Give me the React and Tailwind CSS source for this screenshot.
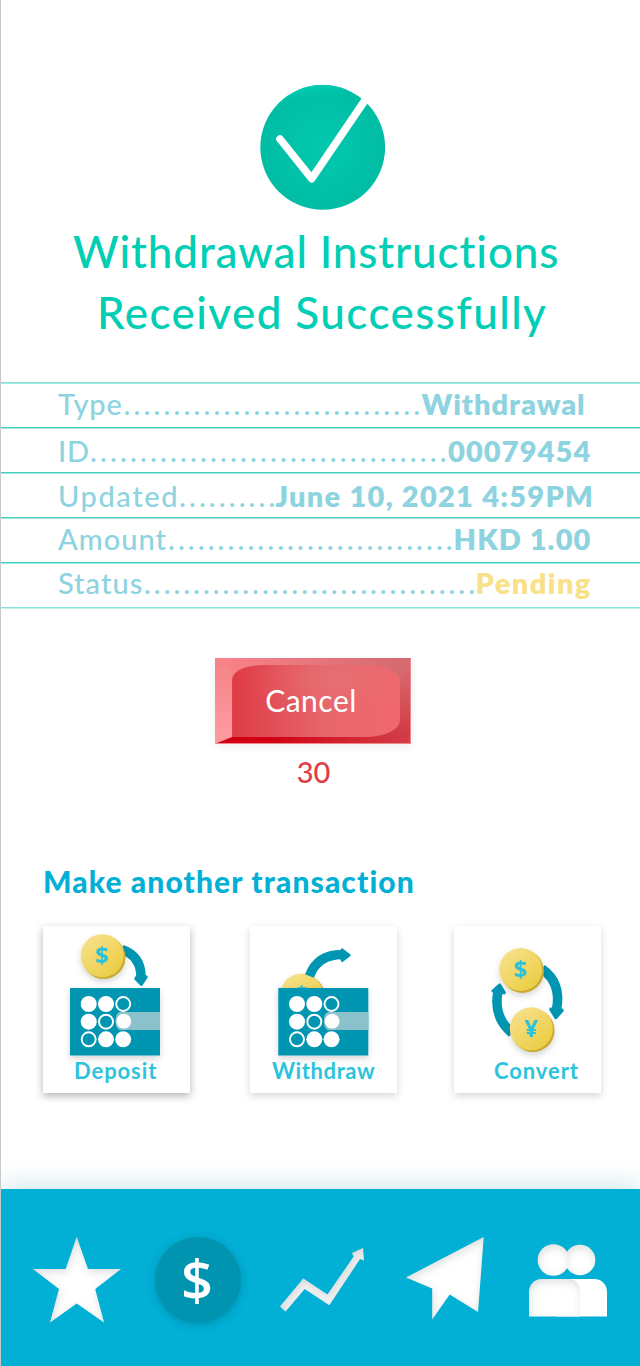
import React from 'react';

const rows = [
    { label: 'Type', dots: 30, value: 'Withdrawal', row: 'pt-[6px] border-[#85e2d8]', labelClass: 'w-[65.5px] tracking-[0.8px]', dotsClass: 'w-[298px] tracking-[3.15px]', valueClass: 'text-[#8dd3e0] tracking-[0.95px]' },
    { label: 'ID', dots: 36, value: '00079454', row: 'pt-[8px] border-[#3fcfbe]', labelClass: 'w-[32px] tracking-[0.8px]', dotsClass: 'w-[358px] tracking-[3.15px]', valueClass: 'text-[#8dd3e0] tracking-[1.1px]' },
    { label: 'Updated', dots: 10, value: 'June 10, 2021 4:59PM', row: 'pt-[8px] border-[#3fcfbe]', labelClass: 'w-[121px] tracking-[1.6px]', dotsClass: 'w-[96.5px] tracking-[3.1px]', valueClass: 'text-[#8dd3e0] tracking-[1.27px]' },
    { label: 'Amount', dots: 29, value: 'HKD 1.00', row: 'pt-[6px] border-[#3fcfbe]', labelClass: 'w-[110px] tracking-[1px]', dotsClass: 'w-[285.5px] tracking-[3.08px]', valueClass: 'text-[#8dd3e0] tracking-[1.1px]' },
    { label: 'Status', dots: 34, value: 'Pending', row: 'pt-[5px] border-[#3fcfbe]', labelClass: 'w-[86px] tracking-[1px]', dotsClass: 'w-[331.5px] tracking-[2.98px]', valueClass: 'text-[#f8e187] tracking-[1.4px]' },
];

const CheckBadge = () => (
    <svg className="ml-[259px] block h-[125px] w-[125px]" viewBox="0 0 125 125">
        <defs>
            <radialGradient id="badge">
                <stop offset="0" stopColor="#02c9ae" />
                <stop offset="1" stopColor="#00bda4" />
            </radialGradient>
            <linearGradient id="badgeRim" x1="0.35" y1="0" x2="0.5" y2="1">
                <stop offset="0" stopColor="#00d2b8" />
                <stop offset="0.14" stopColor="#00c3aa" stopOpacity="0" />
            </linearGradient>
        </defs>
        <circle cx="62.7" cy="62.3" r="62.4" fill="url(#badge)" />
        <circle cx="62.7" cy="62.3" r="62.4" fill="url(#badgeRim)" />
        <path d="M20 54L51.7 93.7L106.5 13" fill="none" stroke="#fff" strokeWidth="7.6" strokeLinecap="round" strokeLinejoin="round" />
    </svg>
);

const CancelButton = () => (
    <button className="relative ml-[214px] block h-[86px] w-[196px] shadow-[0_3px_8px_rgba(0,60,50,0.08)]">
        <svg className="absolute inset-0 h-[86px] w-[196px]" viewBox="0 0 195 86" preserveAspectRatio="none">
            <defs>
                <linearGradient id="bevelTop">
                    <stop offset="0" stopColor="#f98489" />
                    <stop offset="1" stopColor="#d4696e" />
                </linearGradient>
                <linearGradient id="bevelLeft" x1="0" y1="0" x2="0" y2="1">
                    <stop offset="0" stopColor="#f58387" />
                    <stop offset="1" stopColor="#ff9ca2" />
                </linearGradient>
                <linearGradient id="bevelRight" x1="0" y1="0" x2="0" y2="1">
                    <stop offset="0.1" stopColor="#d96a70" />
                    <stop offset="0.9" stopColor="#d13a43" />
                </linearGradient>
                <linearGradient id="bevelBottom">
                    <stop offset="0.25" stopColor="#d10012" />
                    <stop offset="1" stopColor="#d33e47" />
                </linearGradient>
                <linearGradient id="face">
                    <stop offset="0" stopColor="#de3b44" />
                    <stop offset="0.55" stopColor="#e7666c" />
                    <stop offset="1" stopColor="#f0686e" />
                </linearGradient>
                <radialGradient id="faceGlow" cx="0.6" cy="0.2" r="0.5">
                    <stop offset="0" stopColor="#e57475" stopOpacity="0.7" />
                    <stop offset="1" stopColor="#e66a6e" stopOpacity="0" />
                </radialGradient>
            </defs>
            <rect width="195" height="86" fill="url(#bevelTop)" />
            <path d="M0 0L17 14V79L0 86Z" fill="url(#bevelLeft)" />
            <path d="M195 0V86L150 79L184 60V20Z" fill="url(#bevelRight)" />
            <path d="M2 85L17 79H195V85Z" fill="url(#bevelBottom)" />
            <path d="M17 79V22C17 12 32 7 49 7H148C168 7 184 13 184 24V62C184 72 169 79 147 79Z" fill="url(#face)" />
            <path d="M17 79V22C17 12 32 7 49 7H148C168 7 184 13 184 24V62C184 72 169 79 147 79Z" fill="url(#faceGlow)" />
            <path d="M1 85.5H194.5V0" fill="none" stroke="#f0858a" />
        </svg>
        <span className="relative -top-[1px] -left-[2px] block text-center text-[30px] leading-[86px] font-normal tracking-[0.5px] text-white">Cancel</span>
    </button>
);

const Coin = ({ x, y, sign }) => (
    <g filter="url(#soft)">
        <circle cx={x + 1.6} cy={y + 1.7} r="21.7" fill="#c9ab36" />
        <circle cx={x} cy={y} r="21.5" fill="url(#gold)" />
        <text x={x} y={y + 8.2} textAnchor="middle" fill="#2bc2db" fontFamily="Open Sans" fontSize="24" fontWeight="700">{sign}</text>
    </g>
);

// keypad with a translucent card sliding out of it
const Keypad = ({ x }) => (
    <g transform={`translate(${x} 62)`}>
        <rect width="90" height="67.5" fill="#0095b1" filter="url(#soft)" />
        {[[18.7, 16], [36, 16], [18.7, 33.7], [36, 51.3], [53.2, 51.3]].map(([cx, cy]) => (
            <circle key={`${cx}-${cy}`} cx={cx} cy={cy} r="8" fill="#fff" />
        ))}
        {[[53.2, 16], [36, 33.7], [18.7, 51.3]].map(([cx, cy]) => (
            <circle key={`${cx}-${cy}`} cx={cx} cy={cy} r="7" fill="none" stroke="#fff" strokeWidth="1.9" />
        ))}
        <path d="M90 24H50C44 25 44 41 50 42H90Z" fill="#8bc1ca" />
        <circle cx="53.8" cy="33.2" r="7.4" fill="#fff" />
    </g>
);

const SvgDefs = () => (
    <svg className="absolute h-0 w-0">
        <defs>
            <linearGradient id="gold" x1="0.1" y1="0.1" x2="0.8" y2="0.9">
                <stop offset="0" stopColor="#f7e08b" />
                <stop offset="1" stopColor="#ebce45" />
            </linearGradient>
            <filter id="soft" x="-30%" y="-30%" width="160%" height="170%">
                <feDropShadow dx="0" dy="3" stdDeviation="3" floodColor="#000" floodOpacity="0.16" />
            </filter>
            <filter id="inset" x="-10%" y="-10%" width="120%" height="120%">
                <feOffset in="SourceAlpha" dx="1" dy="3" result="moved" />
                <feGaussianBlur in="moved" stdDeviation="4" result="blurred" />
                <feComposite in="SourceAlpha" in2="blurred" operator="out" result="edge" />
                <feFlood floodColor="#23484b" floodOpacity="0.3" />
                <feComposite in2="edge" operator="in" result="shade" />
                <feMerge>
                    <feMergeNode in="SourceGraphic" />
                    <feMergeNode in="shade" />
                </feMerge>
            </filter>
        </defs>
    </svg>
);

const Card = ({ label, labelClass, className, children }) => (
    <button className={`flex h-[167px] w-[147px] flex-col items-start justify-start bg-white text-left ${className}`}>
        <svg className="block h-[133px] w-[147px] shrink-0 overflow-visible" viewBox="0 0 147 133">{children}</svg>
        <span className={`block pt-px text-[22px] leading-[22px] font-bold whitespace-nowrap text-[#2dc3db] ${labelClass}`}>{label}</span>
    </button>
);

const NavBar = () => (
    <nav className="flex h-[177px] items-start bg-[#02afd5] shadow-[0_-4px_24px_rgba(0,130,165,0.2)]">
        <svg className="mt-[48px] ml-[32px] h-[86px] w-[88px] shrink-0" viewBox="0 0 88 86">
            <path d="M43.7 0L55 32H88L62.2 52L71 85.5L43.7 66.5L17 85.5L26 52L0 32H32.7Z" fill="#fff" filter="url(#inset)" />
        </svg>
        <div className="mt-[48px] ml-[34px] flex h-[86px] w-[86px] shrink-0 items-center justify-center rounded-full bg-[#0094b0] shadow-[0_2px_8px_rgba(0,80,100,0.3)]">
            <span className="relative -top-[2px] -left-[1px] font-['Open_Sans','Noto_Sans',sans-serif] text-[56px] leading-[86px] font-semibold text-white">$</span>
        </div>
        <svg className="mt-[58px] ml-[39px] h-[66px] w-[86px] shrink-0" viewBox="0 0 86 66">
            <path d="M0 59.5L23.3 31.5L47.5 47.5L73.7 9.5L72 6L83 1L84 13.5L80 12L49.3 58.3L24.7 42L5.5 64.5Z" fill="#f7f7f8" filter="url(#inset)" />
        </svg>
        <svg className="mt-[48px] ml-[40px] h-[84px] w-[78px] shrink-0" viewBox="0 0 78 84">
            <path d="M0 40.5L77.7 0L72 75L43.7 57.5L26.2 82.5V51.5Z" fill="#fff" filter="url(#inset)" />
        </svg>
        <svg className="mt-[55px] ml-[45px] h-[73px] w-[78px] shrink-0" viewBox="0 0 78 73">
            <circle cx="51" cy="16" r="15.3" fill="#fff" filter="url(#inset)" />
            <circle cx="24.5" cy="16" r="15.8" fill="#fff" filter="url(#inset)" />
            <path d="M27 35H65C73 35 78 41 78 48V72.5H27Z" fill="#fff" />
            <path d="M0 72.5V48C0 41 5 35 13 35H40C47 35 51 41 51 48V72.5Z" fill="#fff" filter="url(#inset)" />
        </svg>
    </nav>
);

const App = () => {
    return (
        <div className="flex h-[1366px] w-[640px] flex-col overflow-hidden border-l border-[#c8c8c8] bg-white font-['Lato','Noto_Sans',sans-serif]">
            <SvgDefs />
            <header className="h-[382px] shrink-0 pt-[85px]">
                <CheckBadge />
                <h1 className="mt-[11px] text-[44px] leading-[61px] font-medium whitespace-nowrap text-[#00ceb5]">
                    <span className="block pl-[72px] tracking-[0.87px]">Withdrawal Instructions</span>
                    <span className="block pl-[96px] tracking-[1.42px]">Received Successfully</span>
                </h1>
            </header>

            <section className="h-[226px] shrink-0 border-b border-[#85e2d8] shadow-[0_1px_0_#c5f0ec]">
                {rows.map(({ label, dots, value, row, labelClass, dotsClass, valueClass }) => (
                    <div key={label} className={`flex h-[45px] border-t pl-[57px] text-[29px] leading-[29px] whitespace-nowrap text-[#8dd3e0] shadow-[inset_0_1px_0_#a5e7df] ${row}`}>
                        <span className={`shrink-0 font-medium ${labelClass}`}>{label}</span>
                        <span className={`shrink-0 font-medium ${dotsClass}`}>{'.'.repeat(dots)}</span>
                        <span className={`font-extrabold ${valueClass}`}>{value}</span>
                    </div>
                ))}
            </section>

            <section className="h-[259px] shrink-0 pt-[50px]">
                <CancelButton />
                <p className="ml-[215px] w-[195px] pt-[13px] text-center text-[29px] leading-[29px] font-medium text-[#df3c45]">30</p>
            </section>

            <section className="h-[322px] shrink-0">
                <h2 className="-mt-px pl-[42px] text-[30px] leading-[30px] font-black tracking-[1.1px] whitespace-nowrap text-[#02afd5]">Make another transaction</h2>
                <div className="mt-[30px] flex pl-[42px]">
                    <Card label="Deposit" labelClass="pl-[31px] tracking-[0.9px]" className="shadow-[0_3px_8px_rgba(0,0,0,0.3)]">
                        <path d="M79 23.5C92 28 98 38 98 51" fill="none" stroke="#0095b1" strokeWidth="9.5" />
                        <path d="M91 53L93 49.5L103 49L105 51L99.3 59.7L97.5 59.7Z" fill="#0095b1" />
                        <Coin x={59.2} y={29.7} sign="$" />
                        <Keypad x={27} />
                    </Card>
                    <Card label="Withdraw" labelClass="pl-[22px] tracking-[0.6px]" className="ml-[60px] shadow-[0_3px_8px_rgba(0,0,0,0.16)]">
                        <Coin x={51.7} y={69} sign="$" />
                        <path d="M59.5 50C65 35 76 28.5 92 28.5" fill="none" stroke="#0095b1" strokeWidth="9.5" />
                        <path d="M90.5 24L92 22L100.5 28.5V30L92 36.5L90.5 34Z" fill="#0095b1" />
                        <Keypad x={28.3} />
                    </Card>
                    <Card label="Convert" labelClass="pl-[40px] tracking-[0.9px]" className="ml-[57px] shadow-[0_3px_8px_rgba(0,0,0,0.16)]">
                        <path d="M88 43C101 52 106 66 102.5 84" fill="none" stroke="#0095b1" strokeWidth="9.5" />
                        <path d="M95 83.5L96 81.5L108.7 82.5L110 84.7L102.5 93.3H101Z" fill="#0095b1" />
                        <path d="M58 107C46 97 41 83 43.7 67" fill="none" stroke="#0095b1" strokeWidth="9.5" />
                        <path d="M45 57.5H46.5L52 66.5L51 68.5L38.7 66.7L37 64.7Z" fill="#0095b1" />
                        <Coin x={66.7} y={43.5} sign="$" />
                        <Coin x={77.3} y={102.8} sign="¥" />
                    </Card>
                </div>
            </section>

            <NavBar />
        </div>
    );
};

export default App;
